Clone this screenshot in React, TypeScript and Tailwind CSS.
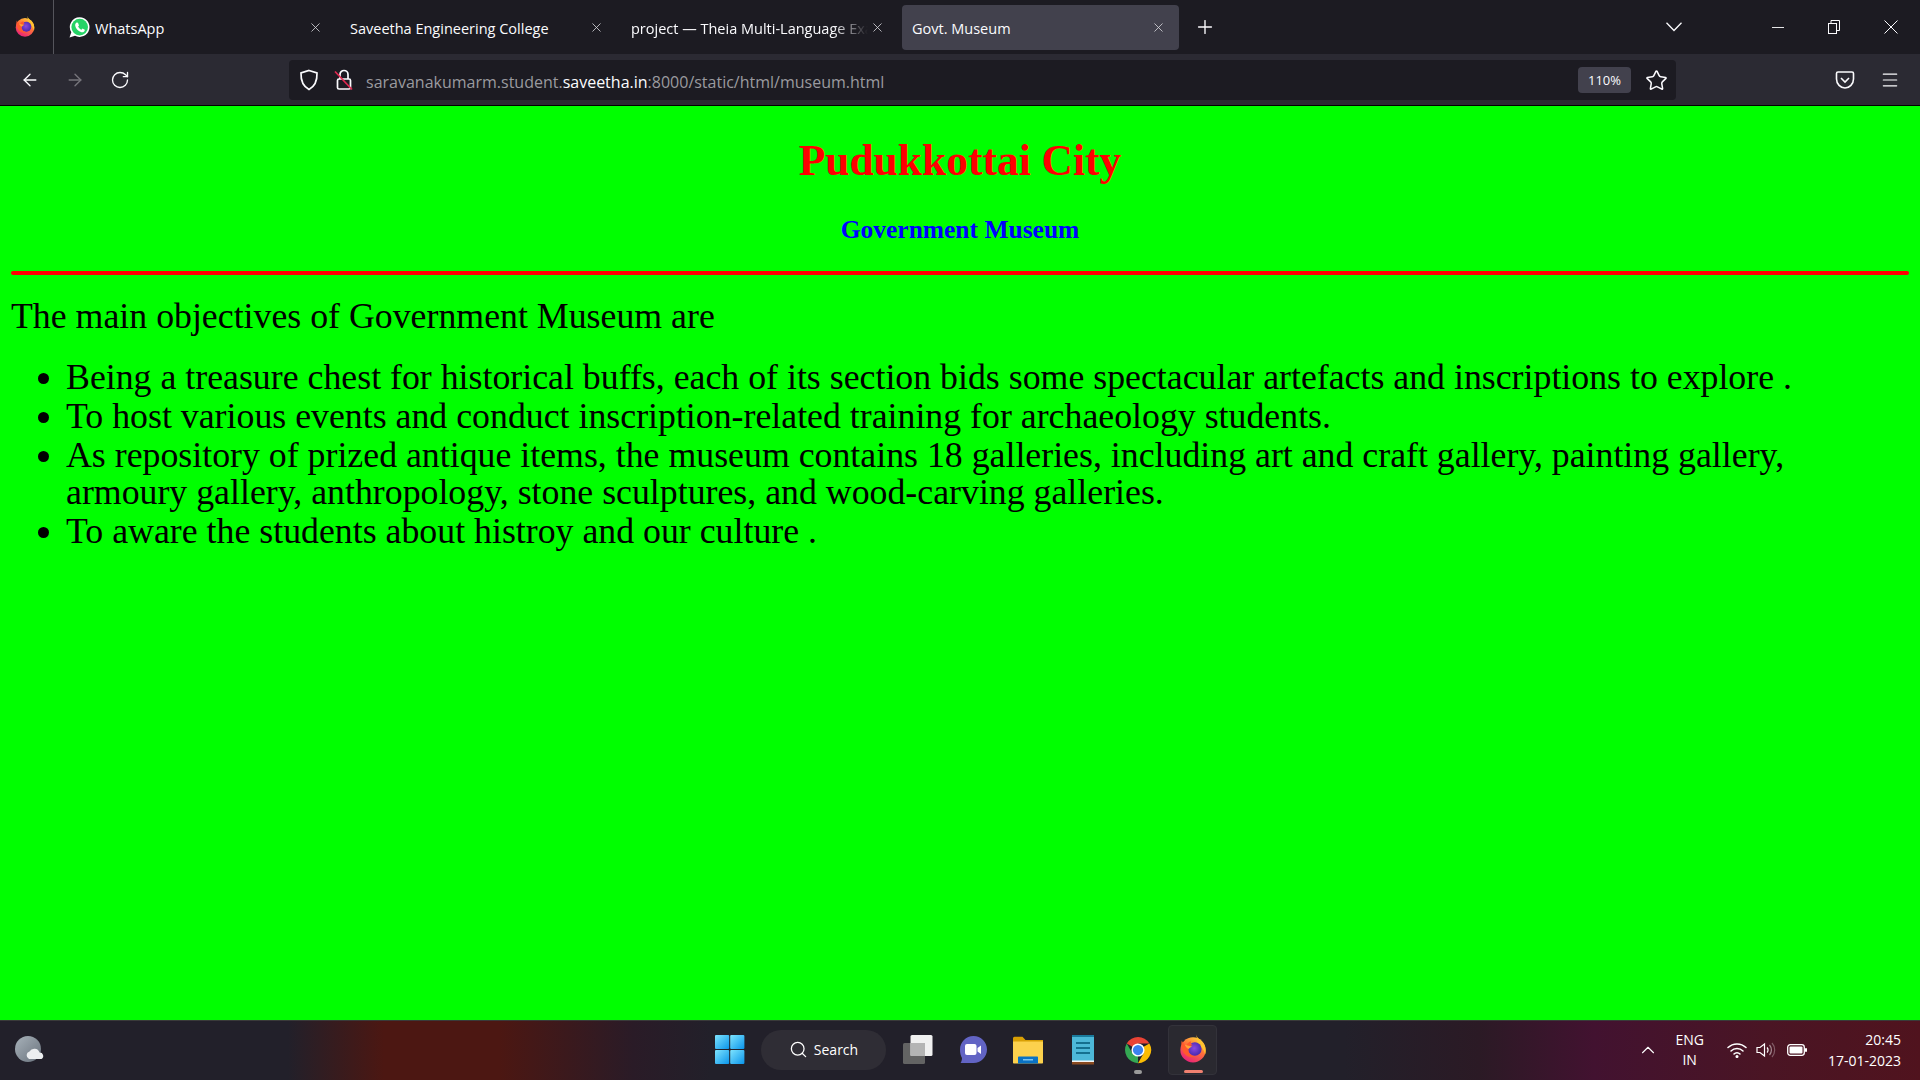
import { ArrowLeft, ArrowRight, RotateCw, Star, X, Plus, ChevronUp, Menu, Search } from 'lucide-react';

function FirefoxLogo({ size, id }: { size: number; id: string }) {
  return (
    <svg width={size} height={size} viewBox="0 0 32 32">
      <defs>
        <linearGradient id={`${id}-a`} x1="0.85" y1="0.05" x2="0.3" y2="1">
          <stop offset="0" stopColor="#ffd23a" />
          <stop offset="0.45" stopColor="#ff7139" />
          <stop offset="1" stopColor="#e8207a" />
        </linearGradient>
        <radialGradient id={`${id}-b`} cx="0.45" cy="0.45" r="0.55">
          <stop offset="0" stopColor="#8a4ae0" />
          <stop offset="1" stopColor="#4a2ab0" />
        </radialGradient>
      </defs>
      <circle cx="16" cy="18" r="13.500" fill={`url(#${id}-a)`} />
      <path d="M19 1c1 4 5 6 8 10 3 4 3 9 2 12-1-5-4-9-9-12 1-3 0-7-1-10z" fill="#ffc22e" />
      <circle cx="18" cy="17" r="7.200" fill={`url(#${id}-b)`} />
      <path d="M4 8c1 3 3 4 5 5 1-2 3-4 5-4-1 2 0 3 2 4-3 0-5 2-5 5 0 4 4 7 8 7-5 2-12 0-14-6-1-3-2-8-1-11z" fill="#ff5a2c" />
      <path d="M7 12c2 1 4 2 8 2l-4 3c-2-1-3-3-4-5z" fill="#ffa436" />
    </svg>
  );
}

function WhatsAppLogo() {
  return (
    <svg width="21" height="21" viewBox="0 0 21 21">
      <path d="M10.700.300a9.800 9.800 0 1 1-4.700 18.400L.500 20.500l1.800-5.300A9.800 9.800 0 0 1 10.700.300z" fill="#fff" />
      <circle cx="10.700" cy="10.100" r="8.300" fill="#25d366" />
      <path d="M7.700 5.600c-1 .5-1.700 1.500-1.500 3 .4 3 3.300 6 6.300 6.700 1.600.3 2.900-.5 3.200-1.700l.1-.8-2.300-1.200-1 1.200c-1.500-.6-2.700-1.800-3.400-3.300l.9-1-1-2.700z" fill="#fff" />
    </svg>
  );
}

function ChromeLogo() {
  return (
    <svg width="30" height="30" viewBox="0 0 48 48">
      <path d="M24 24 6 13.600A21 21 0 0 1 42.200 13.500L24 13.500z" fill="#ea4335" />
      <path d="M24 24 42.200 13.500A21 21 0 0 1 24 45l9.100-15.800z" fill="#fbbc04" />
      <path d="M24 24 24 45A21 21 0 0 1 6 13.600l9 15.600z" fill="#34a853" />
      <circle cx="24" cy="24" r="10.500" fill="#fff" />
      <circle cx="24" cy="24" r="8.200" fill="#3b82f0" />
    </svg>
  );
}

function TeamsLogo() {
  return (
    <svg width="30" height="30" viewBox="0 0 30 30">
      <path d="M15.500 1C23 1 29 7 29 14.500S23 28 15.500 28H2.500c.8-1 1.400-2.500 1.500-5C2.700 20.800 2 17.800 2 14.500 2 7 8 1 15.500 1z" fill="#6264c4" />
      <rect x="7" y="9" width="11.500" height="11" rx="2" fill="#fff" />
      <path d="M19.500 13l3.500-2.500v8.500l-3.500-2.500z" fill="#fff" />
    </svg>
  );
}

function FolderLogo() {
  return (
    <svg width="30" height="28" viewBox="0 0 30 28">
      <path d="M0 2.500C0 1.500.7.800 1.500.800h8L12.500 4H30v5H0z" fill="#d99f04" />
      <path d="M0 5.500h30v21c0 .6-.5 1-1 1H1c-.5 0-1-.4-1-1z" fill="#fcd14d" />
      <path d="M5 27.500v-6c0-.6.5-1 1-1h18c.5 0 1 .4 1 1v6z" fill="#0a72c4" />
      <rect x="10" y="23" width="10" height="1.500" fill="#7cc4f0" />
    </svg>
  );
}

function NotepadLogo() {
  return (
    <svg width="23" height="31" viewBox="0 0 23 31">
      <rect x="0" y="1.500" width="22" height="28" fill="#4db8d8" />
      <rect x="0" y="28" width="22" height="2.500" fill="#8a4a20" />
      <rect x="0" y="26.500" width="22" height="1.500" fill="#f4f4f4" />
      <rect x="0" y="1" width="22" height="2" fill="#1a7a9c" />
      <rect x="4" y="8" width="14" height="2" fill="#15708f" />
      <rect x="4" y="13" width="14" height="2" fill="#15708f" />
      <rect x="4" y="18" width="14" height="2" fill="#15708f" />
    </svg>
  );
}

function WindowsLogo() {
  return (
    <svg width="30" height="29" viewBox="0 0 30 29">
      <defs>
        <linearGradient id="win" x1="0" y1="0" x2="1" y2="1">
          <stop offset="0" stopColor="#7ee4ff" />
          <stop offset="1" stopColor="#0a94ea" />
        </linearGradient>
      </defs>
      <rect x="0" y="0" width="14.200" height="14" rx="1" fill="url(#win)" />
      <rect x="15.200" y="0" width="14.200" height="14" rx="1" fill="url(#win)" />
      <rect x="0" y="15" width="14.200" height="14" rx="1" fill="url(#win)" />
      <rect x="15.200" y="15" width="14.200" height="14" rx="1" fill="url(#win)" />
    </svg>
  );
}

function TaskView() {
  return (
    <svg width="30" height="29" viewBox="0 0 30 29">
      <rect x="0" y="8" width="22" height="21" rx="1.500" fill="#636363" />
      <rect x="7.500" y="0" width="22" height="21" rx="1.500" fill="#f0f0f0" />
      <rect x="7.500" y="8" width="14.500" height="13" fill="#b4b4b4" />
    </svg>
  );
}

function WeatherIcon() {
  return (
    <svg width="29" height="27" viewBox="0 0 29 27">
      <defs>
        <linearGradient id="moon" x1="0" y1="0" x2="1" y2="1">
          <stop offset="0" stopColor="#a8b2ba" />
          <stop offset="1" stopColor="#69727c" />
        </linearGradient>
      </defs>
      <circle cx="13" cy="13" r="13" fill="url(#moon)" />
      <path d="M14 23a4 4 0 0 1 .5-7.500 5.500 5.500 0 0 1 10 1 3.500 3.500 0 0 1 2 6.500z" fill="#eceef0" />
    </svg>
  );
}

const tabs = [
  { title: 'WhatsApp', icon: true },
  { title: 'Saveetha Engineering College' },
  { title: 'project — Theia Multi-Language Exam', fade: true },
  { title: 'Govt. Museum', active: true },
];

const items = [
  'Being a treasure chest for historical buffs, each of its section bids some spectacular artefacts and inscriptions to explore .',
  'To host various events and conduct inscription-related training for archaeology students.',
  'As repository of prized antique items, the museum contains 18 galleries, including art and craft gallery, painting gallery, armoury gallery, anthropology, stone sculptures, and wood-carving galleries.',
  'To aware the students about histroy and our culture .',
];

export default function App() {
  return (
    <div className="flex h-screen w-full flex-col overflow-hidden font-['Open_Sans',sans-serif]">
      {/* tab strip */}
      <div className="flex h-[54px] items-center bg-[#1c1b22] text-[#fbfbfe]">
        <div className="flex h-full w-[54px] items-center justify-center border-r border-[#55555c] pb-[2px] pr-[3px]">
          <FirefoxLogo size={22} id="ff-top" />
        </div>
        <div className="ml-[3px] flex h-full">
          {tabs.map((tab) => (
            <div key={tab.title} className="flex h-full w-[281px] items-center px-[2px]">
              <div className={`flex h-[45px] w-full items-center rounded-[4px] pl-[10px] pr-[13px] ${tab.active ? 'bg-[#42414d]' : ''}`}>
                {tab.icon && (
                  <span className="mr-[5px] shrink-0">
                    <WhatsAppLogo />
                  </span>
                )}
                <span className={`flex-1 overflow-hidden whitespace-nowrap pt-[3px] text-[14.500px] ${tab.fade ? '[mask-image:linear-gradient(90deg,#000_85%,transparent)]' : ''}`}>
                  {tab.title}
                </span>
                <X size={15} strokeWidth={1.3} className="ml-[2px] shrink-0 text-[#d8d8dc]" />
              </div>
            </div>
          ))}
        </div>
        <Plus size={22} strokeWidth={1.5} className="ml-[13px]" />
        <div className="flex-1" />
        <svg width="16" height="10" viewBox="0 0 16 10" fill="none" stroke="currentColor" strokeWidth="1.300" className="mr-[90px]">
          <path d="M.5.800 8 8.500 15.500.800" />
        </svg>
        <div className="mr-[44px] h-px w-[12px] bg-[#e4e4e6]" />
        <svg width="12" height="14" viewBox="0 0 12 14" fill="none" stroke="currentColor" className="mr-[44px]">
          <rect x="0.500" y="3.500" width="8" height="10" />
          <path d="M3 3.500V.500h8.500V10.500H8.500" />
        </svg>
        <svg width="14" height="14" viewBox="0 0 14 14" fill="none" stroke="currentColor" className="mr-[22px]">
          <path d="M.500.500l13 13M13.500.500l-13 13" />
        </svg>
      </div>

      {/* toolbar */}
      <div className="flex h-[52px] items-center border-b border-black bg-[#2b2a33] pt-[1px] text-[#fbfbfe]">
        <ArrowLeft size={20} strokeWidth={1.6} className="ml-[20px]" />
        <ArrowRight size={20} strokeWidth={1.6} className="ml-[25px] text-[#77767c]" />
        <RotateCw size={20} strokeWidth={1.6} className="ml-[25px]" />
        <div className="ml-[159px] flex h-[40px] w-[1387px] items-center rounded-[4px] bg-[#1c1b22]">
          <svg width="20" height="22" viewBox="0 0 20 22" fill="none" stroke="currentColor" strokeWidth="1.700" className="ml-[10px]">
            <path d="M10 1.500 18 4c.3 8-2.500 13.500-8 16.500C4.500 17.500 1.700 12 2 4z" />
          </svg>
          <svg width="20" height="24" viewBox="0 0 20 24" fill="none" className="ml-[15px]">
            <path d="M6 11V6.500a4 4 0 0 1 8 0V11" stroke="#fbfbfe" strokeWidth="1.700" />
            <rect x="3.500" y="11" width="13" height="10" rx="1.500" stroke="#fbfbfe" strokeWidth="1.700" />
            <path d="M1 3.500 18 21.500" stroke="#e22850" strokeWidth="1.700" />
          </svg>
          <div className="ml-[12px] flex-1 whitespace-nowrap pt-[3px] text-[16px] text-[#9a9a9f]">
            saravanakumarm.student.<span className="text-[#fbfbfe]">saveetha.in</span>:8000/static/html/museum.html
          </div>
          <div className="flex h-[26px] w-[53px] items-center justify-center rounded-[4px] bg-[#42414d] pt-[2px] text-[13px]">110%</div>
          <Star size={23} strokeWidth={1.6} className="ml-[14px] mr-[8px]" />
        </div>
        <svg width="20" height="20" viewBox="0 0 20 20" fill="none" stroke="currentColor" strokeWidth="1.600" className="ml-[159px]">
          <path d="M3 2h14c1 0 1.500.6 1.500 1.500V9c0 5-4 9-8.500 9s-8.500-4-8.500-9V3.500C1.500 2.600 2 2 3 2z" />
          <path d="M6 8l4 4 4-4" />
        </svg>
        <Menu size={20} strokeWidth={1.4} className="ml-[25px]" />
      </div>

      {/* page */}
      <main className="flex-1 bg-[#00ff00] font-['Liberation_Serif',serif] text-black">
        <h1 className="mt-[30px] text-center text-[43.500px] font-bold leading-[48px] text-[#ff0000]">Pudukkottai City</h1>
        <h2 className="mt-[31px] text-center text-[25.500px] font-bold leading-[30px] text-[#0000ff]">Government Museum</h2>
        <div className="mx-[11px] mt-[26px] h-[4px] rounded-[2px] bg-[#ff0000]" />
        <p className="ml-[11px] mt-[23px] text-[35.800px] leading-[36px]">The main objectives of Government Museum are</p>
        <ul className="mx-[11px] mt-[25px] list-disc pl-[55px] text-[35.800px] leading-[37px]">
          {items.map((item) => (
            <li key={item} className="mb-[2px]">{item}</li>
          ))}
        </ul>
      </main>

      {/* windows taskbar */}
      <div className="flex h-[60px] items-center border-t border-[#3a3a3a] bg-[linear-gradient(90deg,#22202a_0%,#22202a_15%,#4c1712_20%,#4c1712_26%,#2a1b27_33%,#22202a_37%,#22202a_70%,#2b1a25_77%,#421230_83%,#4a1524_92%,#50131e_100%)] pb-[2px] text-white">
        <div className="ml-[15px]"><WeatherIcon /></div>
        <div className="ml-[671px]"><WindowsLogo /></div>
        <div className="ml-[16px] flex h-[40px] w-[125px] items-center justify-center rounded-full bg-[#2f2d35] text-[14px]">
          <Search size={19} strokeWidth={1.6} className="mr-[6px]" />
          Search
        </div>
        <div className="ml-[17px]"><TaskView /></div>
        <div className="ml-[25px]"><TeamsLogo /></div>
        <div className="ml-[25px]"><FolderLogo /></div>
        <div className="ml-[29px]"><NotepadLogo /></div>
        <div className="relative ml-[28px]">
          <ChromeLogo />
          <div className="absolute left-[11px] top-[35px] h-[4px] w-[8px] rounded-full bg-[#9a9a9a]" />
        </div>
        <div className="relative ml-[15px] flex h-[50px] w-[49px] items-center justify-center rounded-[4px] border border-[#33323a] bg-[#2a2930] pb-[4px]">
          <FirefoxLogo size={30} id="ff-bar" />
          <div className="absolute bottom-[1px] left-[15px] h-[3px] w-[19px] rounded-full bg-[#f08070]" />
        </div>
        <div className="flex-1" />
        <ChevronUp size={22} strokeWidth={1.2} className="mr-[16px]" />
        <div className="mr-[23px] text-center text-[14px] leading-[20px]">
          <div>ENG</div>
          <div>IN</div>
        </div>
        <svg width="20" height="16" viewBox="0 0 20 16" fill="none" stroke="currentColor" strokeWidth="1.500" strokeLinecap="round" className="mr-[9px]">
          <path d="M1 5.500a13 13 0 0 1 18 0" />
          <path d="M4 9a8.500 8.500 0 0 1 12 0" />
          <path d="M7 12a4 4 0 0 1 6 0" />
          <circle cx="10" cy="14.500" r="0.800" fill="currentColor" />
        </svg>
        <svg width="20" height="16" viewBox="0 0 20 16" fill="none" stroke="currentColor" strokeWidth="1.200" className="mr-[11px]">
          <path d="M1 5.500h3L8.500 2v12L4 10.500H1z" />
          <path d="M11 5.500a3.500 3.500 0 0 1 0 5" />
          <path d="M13.500 3a7.500 7.500 0 0 1 0 10" opacity="0.500" />
          <path d="M16 1a10.500 10.500 0 0 1 0 14" opacity="0.300" />
        </svg>
        <svg width="20" height="12" viewBox="0 0 20 12" className="mr-[21px]">
          <rect x="0.700" y="0.700" width="16.600" height="10.600" rx="2.500" fill="none" stroke="#fff" strokeWidth="1.300" />
          <rect x="2.500" y="2.500" width="13" height="7" rx="1" fill="#fff" />
          <rect x="18" y="4" width="2" height="4" rx="1" fill="#fff" />
        </svg>
        <div className="mr-[19px] text-right text-[14px] leading-[21px]">
          <div>20:45</div>
          <div>17-01-2023</div>
        </div>
      </div>
    </div>
  );
}
